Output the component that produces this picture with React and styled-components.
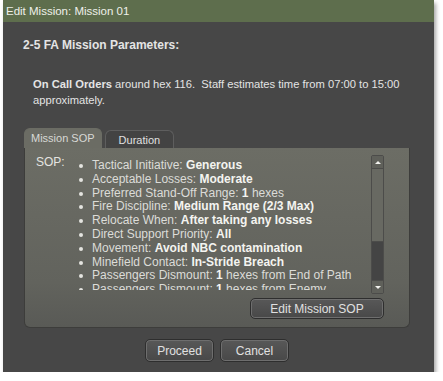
import React from 'react';
import styled, { createGlobalStyle } from 'styled-components';

const GlobalStyle = createGlobalStyle`
  body {
    margin: 0;
    background: #fff;
    font-family: "Liberation Sans", Tahoma, sans-serif;
  }
`;

const Page = styled.div`
  padding: 0 0 0 3px;
`;

const Window = styled.div`
  width: 431px;
  height: 372px;
  background: #474747;
  display: flex;
  flex-direction: column;
  box-shadow: 2px 3px 4px rgba(0, 0, 0, 0.35);
`;

const TitleBar = styled.div`
  height: 22px;
  background: #5e6e4d;
  color: #eef0ea;
  font-size: 11.5px;
  line-height: 22px;
  padding-left: 3px;
`;

const Body = styled.div`
  flex: 1;
  padding: 16px 21px 0 20px;
  display: flex;
  flex-direction: column;
  color: #e4e4e4;
  font-size: 12px;
`;

const Heading = styled.div`
  font-weight: bold;
  font-size: 12px;
`;

const Orders = styled.p`
  margin: 24px 0 0 10px;
  font-size: 11.2px;
  line-height: 16px;
  b { font-weight: bold; }
`;

const Tabs = styled.div`
  display: flex;
  align-items: flex-end;
  gap: 3px;
  margin-top: 20px;
  margin-left: 1px;
`;

const Tab = styled.div`
  height: ${p => (p.$active ? '19px' : '17px')};
  padding: 0 ${p => (p.$active ? '6px' : '13px')};
  line-height: 18px;
  background: ${p => (p.$active ? '#6b6c64' : '#434343')};
  color: ${p => (p.$active ? '#d8d9d5' : '#e0e0e0')};
  border: 1px solid ${p => (p.$active ? '#6b6c64' : '#5e5e5e')};
  border-bottom: none;
  border-radius: 6px 6px 0 0;
  font-size: 11px;
`;

const Panel = styled.div`
  margin-left: 1px;
  width: 386px;
  height: 180px;
  box-sizing: border-box;
  background: linear-gradient(#6c6d65, #62635d 75%, #595a56);
  border-radius: 0 0 6px 6px;
  border: 1px solid #3d3d3b;
  border-top: none;
  padding: 7px 25px 0 11px;
  display: flex;
  flex-direction: column;
`;

const SopRow = styled.div`
  display: flex;
`;

const Label = styled.div`
  width: 34px;
  color: #e4e4e0;
`;

const ListWindow = styled.div`
  flex: 1;
  height: 131px;
  overflow: hidden;
  margin-top: 4px;
`;

const List = styled.ul`
  margin: 0;
  padding: 0 0 0 22px;
  list-style: none;
`;

const Item = styled.li`
  position: relative;
  line-height: 13.8px;
  color: #dcdcd8;
  white-space: nowrap;
  b { color: #f4f4f0; }
  &::before {
    content: '';
    position: absolute;
    left: -13px;
    top: 5px;
    width: 4px;
    height: 4px;
    border-radius: 50%;
    background: #e4e4e0;
  }
`;

const ScrollBar = styled.div`
  width: 13px;
  height: 139px;
  display: flex;
  flex-direction: column;
  border: 1px solid #4c4c4a;
  box-sizing: border-box;
  border-radius: 2px;
`;

const ScrollBtn = styled.div`
  height: 12px;
  background: #5f605a;
  display: flex;
  align-items: center;
  justify-content: center;
  border-bottom: ${p => (p.$down ? 'none' : '1px solid #4c4c4a')};
  border-top: ${p => (p.$down ? '1px solid #4c4c4a' : 'none')};
`;

const Arrow = styled.div`
  width: 0;
  height: 0;
  border-left: 3px solid transparent;
  border-right: 3px solid transparent;
  ${p => (p.$down ? 'border-top: 3px solid #f2f2ee;' : 'border-bottom: 3px solid #f2f2ee;')}
`;

const Thumb = styled.div`
  height: 72px;
  background: #686962;
  border-bottom: 1px solid #4c4c4a;
`;

const Track = styled.div`
  flex: 1;
  background: #444444;
`;

const Actions = styled.div`
  display: flex;
  justify-content: ${p => p.$center ? 'center' : 'flex-end'};
  gap: ${p => p.$center ? '6px' : '0'};
  margin-top: ${p => p.$center ? '11px' : '4px'};
  margin-left: ${p => p.$center ? '-2px' : '0'};
`;

const Button = styled.button`
  width: ${p => p.$w}px;
  height: ${p => p.$h}px;
  border: 1px solid #2e2e2e;
  border-radius: 5px;
  background: linear-gradient(#585858, #484848);
  box-shadow: inset 0 0 0 1px #6e6e6e;
  color: #e0e0e0;
  font-family: inherit;
  font-size: 12px;
  padding: 0;
`;

const items = [
  ['Tactical Initiative: ', 'Generous', ''],
  ['Acceptable Losses: ', 'Moderate', ''],
  ['Preferred Stand-Off Range: ', '1', ' hexes'],
  ['Fire Discipline: ', 'Medium Range (2/3 Max)', ''],
  ['Relocate When: ', 'After taking any losses', ''],
  ['Direct Support Priority: ', 'All', ''],
  ['Movement: ', 'Avoid NBC contamination', ''],
  ['Minefield Contact: ', 'In-Stride Breach', ''],
  ['Passengers Dismount: ', '1', ' hexes from End of Path'],
  ['Passengers Dismount: ', '1', ' hexes from Enemy'],
];

export default function App() {
  return (
    <Page>
      <GlobalStyle />
      <Window>
        <TitleBar>Edit Mission: Mission 01</TitleBar>
        <Body>
          <Heading>2-5 FA Mission Parameters:</Heading>
          <Orders>
            <b>On Call Orders</b> around hex 116.&nbsp; Staff estimates time from 07:00 to 15:00 approximately.
          </Orders>
          <Tabs>
            <Tab $active>Mission SOP</Tab>
            <Tab>Duration</Tab>
          </Tabs>
          <Panel>
            <SopRow>
              <Label>SOP:</Label>
              <ListWindow>
                <List>
                  {items.map(([k, v, rest], i) => (
                    <Item key={i}>
                      {k}<b>{v}</b>{rest}
                    </Item>
                  ))}
                </List>
              </ListWindow>
              <ScrollBar>
                <ScrollBtn><Arrow /></ScrollBtn>
                <Thumb />
                <Track />
                <ScrollBtn $down><Arrow $down /></ScrollBtn>
              </ScrollBar>
            </SopRow>
            <Actions>
              <Button $w={134} $h={21}>Edit Mission SOP</Button>
            </Actions>
          </Panel>
          <Actions $center>
            <Button $w={69} $h={23}>Proceed</Button>
            <Button $w={69} $h={23}>Cancel</Button>
          </Actions>
        </Body>
      </Window>
    </Page>
  );
}
